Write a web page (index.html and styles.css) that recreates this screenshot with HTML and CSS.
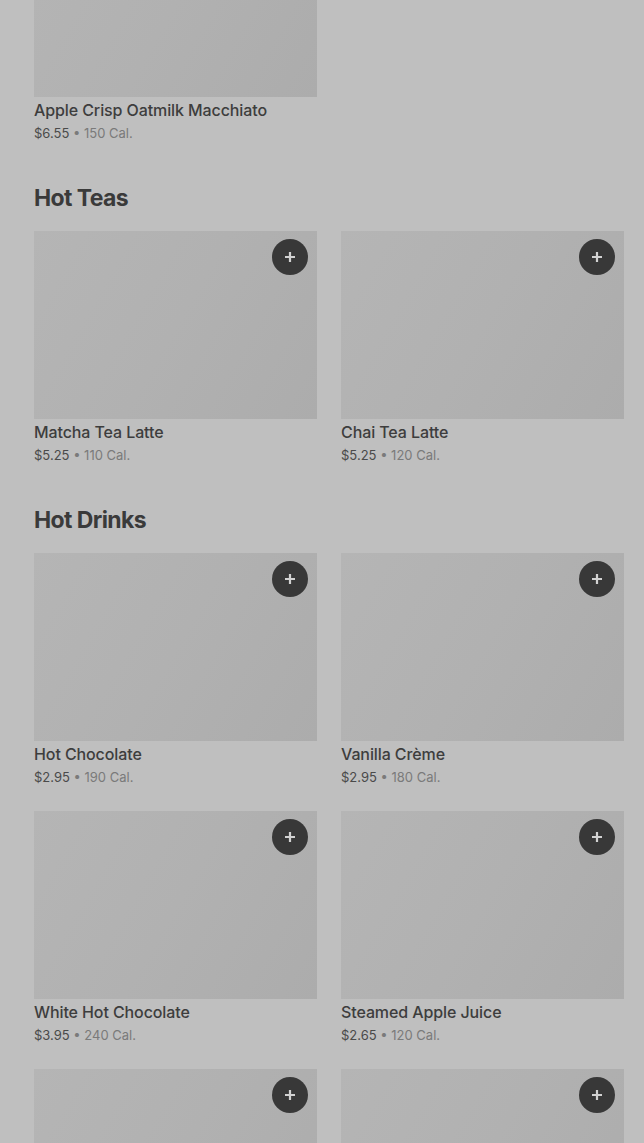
FILE: index.html
```html
<!DOCTYPE html>
<html lang="en">
<head>
<meta charset="UTF-8">
<meta name="viewport" content="width=device-width, initial-scale=1.0">
<title>Menu</title>
<link rel="stylesheet" href="styles.css">
</head>
<body>
<div class="menu">
  <section class="section first">
    <div class="grid">
      <div class="card">
        <div class="photo"></div>
        <div class="name">Apple Crisp Oatmilk Macchiato</div>
        <div class="meta"><span class="price">$6.55</span> • 150 Cal.</div>
      </div>
    </div>
  </section>

  <section class="section">
    <h2>Hot Teas</h2>
    <div class="grid">
      <div class="card">
        <div class="photo">
          <button class="add"><svg viewBox="0 0 12 12" width="12" height="12"><path d="M6 1v10M1 6h10" stroke="currentColor" stroke-width="2.2"/></svg></button>
        </div>
        <div class="name">Matcha Tea Latte</div>
        <div class="meta"><span class="price">$5.25</span> • 110 Cal.</div>
      </div>
      <div class="card">
        <div class="photo">
          <button class="add"><svg viewBox="0 0 12 12" width="12" height="12"><path d="M6 1v10M1 6h10" stroke="currentColor" stroke-width="2.2"/></svg></button>
        </div>
        <div class="name">Chai Tea Latte</div>
        <div class="meta"><span class="price">$5.25</span> • 120 Cal.</div>
      </div>
    </div>
  </section>

  <section class="section">
    <h2>Hot Drinks</h2>
    <div class="grid">
      <div class="card">
        <div class="photo">
          <button class="add"><svg viewBox="0 0 12 12" width="12" height="12"><path d="M6 1v10M1 6h10" stroke="currentColor" stroke-width="2.2"/></svg></button>
        </div>
        <div class="name">Hot Chocolate</div>
        <div class="meta"><span class="price">$2.95</span> • 190 Cal.</div>
      </div>
      <div class="card">
        <div class="photo">
          <button class="add"><svg viewBox="0 0 12 12" width="12" height="12"><path d="M6 1v10M1 6h10" stroke="currentColor" stroke-width="2.2"/></svg></button>
        </div>
        <div class="name">Vanilla Crème</div>
        <div class="meta"><span class="price">$2.95</span> • 180 Cal.</div>
      </div>
      <div class="card">
        <div class="photo">
          <button class="add"><svg viewBox="0 0 12 12" width="12" height="12"><path d="M6 1v10M1 6h10" stroke="currentColor" stroke-width="2.2"/></svg></button>
        </div>
        <div class="name">White Hot Chocolate</div>
        <div class="meta"><span class="price">$3.95</span> • 240 Cal.</div>
      </div>
      <div class="card">
        <div class="photo">
          <button class="add"><svg viewBox="0 0 12 12" width="12" height="12"><path d="M6 1v10M1 6h10" stroke="currentColor" stroke-width="2.2"/></svg></button>
        </div>
        <div class="name">Steamed Apple Juice</div>
        <div class="meta"><span class="price">$2.65</span> • 120 Cal.</div>
      </div>
      <div class="card">
        <div class="photo">
          <button class="add"><svg viewBox="0 0 12 12" width="12" height="12"><path d="M6 1v10M1 6h10" stroke="currentColor" stroke-width="2.2"/></svg></button>
        </div>
        <div class="name">&nbsp;</div>
        <div class="meta">&nbsp;</div>
      </div>
      <div class="card">
        <div class="photo">
          <button class="add"><svg viewBox="0 0 12 12" width="12" height="12"><path d="M6 1v10M1 6h10" stroke="currentColor" stroke-width="2.2"/></svg></button>
        </div>
        <div class="name">&nbsp;</div>
        <div class="meta">&nbsp;</div>
      </div>
    </div>
  </section>
</div>
</body>
</html>
```

FILE: styles.css
```css
html, body {
  height: 100%;
}

body {
  margin: 0;
  background-color: #bfbfbf;
  font-family: Inter, "Noto Sans", sans-serif;
  color: #3b3b3b;
  overflow: hidden;
}

.menu {
  margin-top: -91px;
  padding: 0 20px 0 34px;
}

.section {
  margin-top: 42px;
}

.section.first {
  margin-top: 0;
}

h2 {
  margin: 0 0 19px;
  font-size: 23px;
  line-height: 28px;
  font-weight: 700;
  letter-spacing: -0.6px;
  color: #3a3a3a;
}

.grid {
  display: grid;
  grid-template-columns: 283px 283px;
  column-gap: 24px;
  row-gap: 25px;
}

.photo {
  position: relative;
  height: 188px;
  background: linear-gradient(120deg, #b5b5b5 0%, #b1b1b1 50%, #acacac 100%);
}

.add {
  position: absolute;
  top: 8px;
  right: 9px;
  width: 36px;
  height: 36px;
  padding: 0;
  border: none;
  border-radius: 50%;
  background-color: #383838;
  color: #d2d2d2;
  display: flex;
  align-items: center;
  justify-content: center;
}

.name {
  margin-top: 3px;
  font-size: 16px;
  line-height: 20px;
  font-weight: 500;
  letter-spacing: -0.1px;
  color: #3d3d3d;
}

.meta {
  margin-top: 4px;
  font-size: 13px;
  line-height: 18px;
  color: #7a7a7a;
}

.price {
  color: #4a4a4a;
}
```
